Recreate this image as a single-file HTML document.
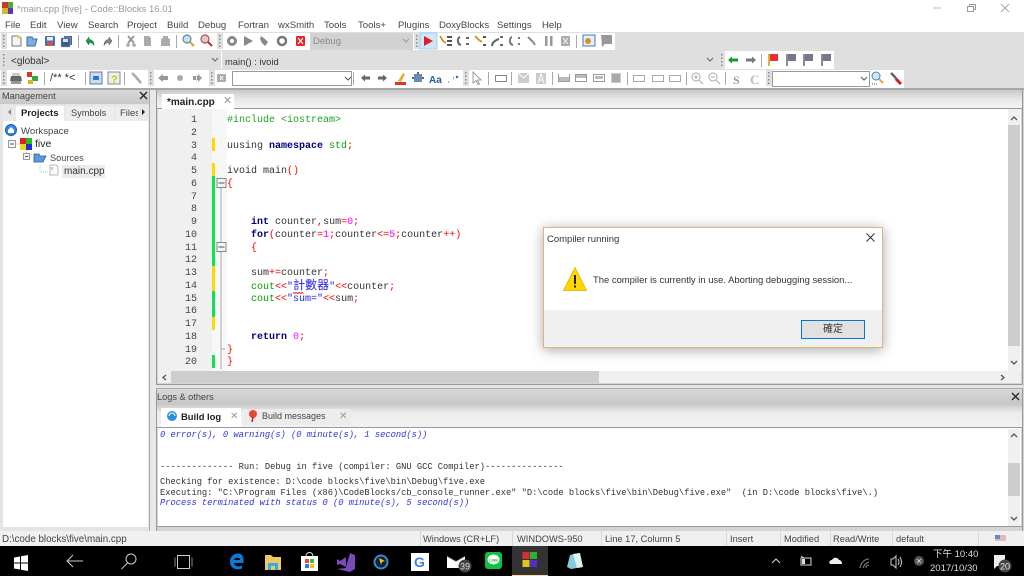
<!DOCTYPE html>
<html><head><meta charset="utf-8"><title>Code::Blocks</title>
<style>
html,body{margin:0;padding:0;width:1024px;height:576px;overflow:hidden;background:#f0f0f0}
body{position:relative;font-family:"Liberation Sans","Noto Sans CJK TC",sans-serif;font-size:10px;color:#333;filter:blur(.3px)}
div,span.t{position:absolute}
.t{position:absolute;white-space:pre;line-height:13px}
.m{top:19px;color:#444;font-size:9.6px}
.tb{background:#fff}
.code{position:absolute;left:227px;white-space:pre;font:10px/13px "Liberation Mono","Noto Sans CJK TC",monospace;color:#333}
.ln{position:absolute;left:158px;width:39px;text-align:right;font:10px/13px "Liberation Mono",monospace;color:#444}
.log{position:absolute;left:160px;white-space:pre;font:8.74px/11px "Liberation Mono",monospace;color:#333}
.k{color:#000080;font-weight:bold}.g{color:#22a022}.r{color:#f00}.n{color:#f0f}.s{color:#2222ee}.p{color:#00a000}
.bl{color:#3030e0;font-style:italic}
.st{top:533px;color:#444;font-size:9.3px}
.ss{position:absolute;top:531px;width:1px;height:15px;background:#d8d8d8}
svg{position:absolute;left:0;top:0}
</style></head><body>
<!-- title and menu -->
<div style="left:0;top:0;width:1024px;height:32px;background:#fff"></div>
<span class="t" style="left:17px;top:3px;color:#999;font-size:9.5px">*main.cpp [five] - Code::Blocks 16.01</span>
<span class="t m" style="left:5px">File</span><span class="t m" style="left:30px">Edit</span><span class="t m" style="left:57px">View</span><span class="t m" style="left:88px">Search</span><span class="t m" style="left:127px">Project</span><span class="t m" style="left:167px">Build</span><span class="t m" style="left:198px">Debug</span><span class="t m" style="left:238px">Fortran</span><span class="t m" style="left:278px">wxSmith</span><span class="t m" style="left:324px">Tools</span><span class="t m" style="left:358px">Tools+</span><span class="t m" style="left:398px">Plugins</span><span class="t m" style="left:439px">DoxyBlocks</span><span class="t m" style="left:497px">Settings</span><span class="t m" style="left:542px">Help</span>
<!-- toolbar zones -->
<div style="left:0;top:32px;width:1024px;height:56px;background:#dfdfdf"></div>
<div class="tb" style="left:0;top:33px;width:215px;height:17px"></div>
<div style="left:215px;top:33px;width:95px;height:17px;background:#fff"></div>
<div style="left:310px;top:33px;width:103px;height:17px;background:#d2d2d2;border:0"></div>
<span class="t" style="left:313px;top:35px;color:#888;font-size:9.5px">Debug</span>
<div class="tb" style="left:413px;top:33px;width:202px;height:17px"></div>
<div class="tb" style="left:0;top:70px;width:904px;height:18px"></div>
<div style="left:7px;top:52px;width:213px;height:16px;background:#dedede"></div>
<span class="t" style="left:11px;top:55px;color:#333">&lt;global&gt;</span>
<div style="left:221px;top:51px;width:1px;height:18px;background:#fff"></div>
<span class="t" style="left:225px;top:55px;color:#333;font-size:9.4px">main() : ivoid</span>
<div class="tb" style="left:724px;top:51px;width:110px;height:18px"></div>
<div style="left:232px;top:71px;width:120px;height:15px;background:#fff;border:1px solid #999;box-sizing:border-box"></div>
<div style="left:772px;top:71px;width:98px;height:16px;background:#fff;border:1px solid #999;box-sizing:border-box"></div>
<span class="t" style="left:50px;top:72px;color:#333;font-size:11px">/** *&lt;</span>
<!-- Body background -->
<div style="left:0;top:88px;width:1024px;height:443px;background:#d4d4d4"></div>
<div style="left:0;top:88px;width:1024px;height:2px;background:#a8a8a8"></div>
<div style="left:150px;top:90px;width:6px;height:441px;background:#e8e8e8"></div>
<div style="left:149px;top:90px;width:1px;height:441px;background:#aaa"></div>
<div style="left:156px;top:90px;width:1px;height:441px;background:#999"></div>
<div style="left:1022px;top:90px;width:1px;height:441px;background:#999"></div>
<div style="left:156px;top:384px;width:867px;height:5px;background:#e4e4e4;border-top:1px solid #999;border-bottom:1px solid #aaa;box-sizing:border-box"></div>
<!-- management -->
<div style="left:0;top:90px;width:149px;height:441px;background:#e4e4e4"></div>
<div style="left:0;top:90px;width:149px;height:14px;background:linear-gradient(#d8d8d8,#c8c8c8)"></div>
<span class="t" style="left:2px;top:90px;color:#444;font-size:9.2px">Management</span>
<div style="left:2px;top:105px;width:147px;height:16px;background:#e8e8e8"></div>
<div style="left:16px;top:106px;width:48px;height:16px;background:#fff"></div>
<div style="left:66px;top:107px;width:48px;height:14px;background:#eee"></div>
<div style="left:116px;top:107px;width:22px;height:14px;background:#eee;overflow:hidden"><span class="t" style="left:4px;top:0;color:#444;font-size:9.5px">Files</span></div>
<span class="t" style="left:21px;top:107px;color:#222;font-weight:bold;font-size:9.5px">Projects</span>
<span class="t" style="left:71px;top:107px;color:#444;font-size:9.2px">Symbols</span>
<div style="left:3px;top:121px;width:145px;height:406px;background:#fff"></div>
<span class="t" style="left:21px;top:125px;color:#444;font-size:9.6px">Workspace</span>
<span class="t" style="left:35px;top:138px;color:#222;font-size:10.5px">five</span>
<span class="t" style="left:50px;top:152px;color:#444;font-size:9.2px">Sources</span>
<div style="left:62px;top:165px;width:43px;height:13px;background:#ececec"></div>
<span class="t" style="left:64px;top:165px;color:#333">main.cpp</span>
<!-- editor -->
<div style="left:157px;top:90px;width:865px;height:18px;background:linear-gradient(#c8c8c8,#e8e8e8 50%,#f4f4f4)"></div>
<div style="left:157px;top:108px;width:865px;height:1px;background:#999"></div>
<div style="left:162px;top:94px;width:72px;height:15px;background:#fff"></div>
<span class="t" style="left:167px;top:96px;color:#222;font-weight:bold;font-size:10px">*main.cpp</span>
<span class="t" style="left:223px;top:95px;color:#999;font-size:11px">✕</span>
<div style="left:158px;top:109px;width:863px;height:274px;background:#fff"></div>
<div style="left:158px;top:109px;width:54px;height:262px;background:#f0f0f0"></div>
<div style="left:212px;top:109px;width:15px;height:262px;background:#f7f7f7"></div>
<div style="left:212px;top:138px;width:3px;height:13px;background:#ffd800"></div>
<div style="left:212px;top:163px;width:3px;height:13px;background:#ffd800"></div>
<div style="left:212px;top:176px;width:3px;height:90px;background:#0ce64a"></div>
<div style="left:212px;top:266px;width:3px;height:25px;background:#ffd800"></div>
<div style="left:212px;top:291px;width:3px;height:26px;background:#0ce64a"></div>
<div style="left:212px;top:317px;width:3px;height:13px;background:#ffd800"></div>
<div style="left:212px;top:355px;width:3px;height:13px;background:#0ce64a"></div>
<div class="ln" style="top:114px">1</div><div class="ln" style="top:127px">2</div><div class="ln" style="top:140px">3</div><div class="ln" style="top:152px">4</div><div class="ln" style="top:165px">5</div><div class="ln" style="top:178px">6</div><div class="ln" style="top:191px">7</div><div class="ln" style="top:203px">8</div><div class="ln" style="top:216px">9</div><div class="ln" style="top:229px">10</div><div class="ln" style="top:242px">11</div><div class="ln" style="top:254px">12</div><div class="ln" style="top:267px">13</div><div class="ln" style="top:280px">14</div><div class="ln" style="top:293px">15</div><div class="ln" style="top:305px">16</div><div class="ln" style="top:318px">17</div><div class="ln" style="top:331px">18</div><div class="ln" style="top:344px">19</div><div class="ln" style="top:356px">20</div>
<div class="code" style="top:114px"><span class="g">#include &lt;iostream&gt;</span></div>
<div class="code" style="top:140px">uusing <span class="k">namespace</span> <span class="p">std</span><span class="r">;</span></div>
<div class="code" style="top:165px">ivoid main<span class="r">()</span></div>
<div class="code" style="top:178px"><span class="r">{</span></div>
<div class="code" style="top:216px">    <span class="k">int</span> counter<span class="r">,</span>sum<span class="r">=</span><span class="n">0</span><span class="r">;</span></div>
<div class="code" style="top:229px">    <span class="k">for</span><span class="r">(</span>counter<span class="r">=</span><span class="n">1</span><span class="r">;</span>counter<span class="r">&lt;=</span><span class="n">5</span><span class="r">;</span>counter<span class="r">++)</span></div>
<div class="code" style="top:242px">    <span class="r">{</span></div>
<div class="code" style="top:267px">    sum<span class="r">+=</span>counter<span class="r">;</span></div>
<div class="code" style="top:280px">    <span class="p">cout</span><span class="r">&lt;&lt;</span><span class="s">"<span style="font-size:12px">計數器</span>"</span><span class="r">&lt;&lt;</span>counter<span class="r">;</span></div>
<div class="code" style="top:293px">    <span class="p">cout</span><span class="r">&lt;&lt;</span><span class="s">"sum="</span><span class="r">&lt;&lt;</span>sum<span class="r">;</span></div>
<div class="code" style="top:331px">    <span class="k">return</span> <span class="n">0</span><span class="r">;</span></div>
<div class="code" style="top:344px"><span class="r">}</span></div>
<div class="code" style="top:356px"><span class="r">}</span></div>
<!-- editor scrollbars -->
<div style="left:1008px;top:109px;width:12px;height:262px;background:#f0f0f0"></div>
<div style="left:1008px;top:125px;width:12px;height:221px;background:#cdcdcd"></div>
<div style="left:158px;top:371px;width:863px;height:12px;background:#f0f0f0"></div>
<div style="left:171px;top:371px;width:428px;height:12px;background:#cdcdcd"></div>
<!-- logs -->
<div style="left:157px;top:389px;width:865px;height:14px;background:linear-gradient(#d8d8d8,#c8c8c8)"></div>
<span class="t" style="left:157px;top:391px;color:#444;font-size:9.2px">Logs &amp; others</span>
<div style="left:157px;top:403px;width:865px;height:24px;background:linear-gradient(#c4c4c4,#ececec 40%,#f2f2f2)"></div>
<div style="left:157px;top:427px;width:865px;height:1px;background:#999"></div>
<div style="left:161px;top:408px;width:80px;height:19px;background:#fff"></div>
<div style="left:243px;top:409px;width:108px;height:16px;background:#ececec"></div>
<span class="t" style="left:181px;top:410px;color:#222;font-weight:bold;font-size:9.4px">Build log</span>
<span class="t" style="left:262px;top:410px;color:#444;font-size:9px">Build messages</span>
<span class="t" style="left:230px;top:410px;color:#999;font-size:10px">✕</span>
<span class="t" style="left:339px;top:410px;color:#999;font-size:10px">✕</span>
<div style="left:158px;top:428px;width:863px;height:98px;background:#fff"></div>
<div style="left:157px;top:526px;width:865px;height:1px;background:#999"></div>
<div class="log bl" style="top:430px">0 error(s), 0 warning(s) (0 minute(s), 1 second(s))</div>
<div class="log" style="top:462px">-------------- Run: Debug in five (compiler: GNU GCC Compiler)---------------</div>
<div class="log" style="top:477px">Checking for existence: D:\code blocks\five\bin\Debug\five.exe</div>
<div class="log" style="top:488px">Executing: "C:\Program Files (x86)\CodeBlocks/cb_console_runner.exe" "D:\code blocks\five\bin\Debug\five.exe"  (in D:\code blocks\five\.)</div>
<div class="log bl" style="top:498px">Process terminated with status 0 (0 minute(s), 5 second(s))</div>
<div style="left:1008px;top:429px;width:12px;height:97px;background:#f0f0f0"></div>
<div style="left:1008px;top:463px;width:12px;height:33px;background:#cdcdcd"></div>
<!-- status -->
<div style="left:0;top:531px;width:1024px;height:15px;background:#f0f0f0"></div>
<span class="t st" style="left:2px;font-size:9.8px">D:\code blocks\five\main.cpp</span>
<span class="t st" style="left:423px">Windows (CR+LF)</span>
<span class="t st" style="left:517px">WINDOWS-950</span>
<span class="t st" style="left:605px">Line 17, Column 5</span>
<span class="t st" style="left:730px">Insert</span>
<span class="t st" style="left:784px">Modified</span>
<span class="t st" style="left:833px">Read/Write</span>
<span class="t st" style="left:896px">default</span>
<div class="ss" style="left:420px"></div><div class="ss" style="left:512px"></div><div class="ss" style="left:601px"></div><div class="ss" style="left:726px"></div><div class="ss" style="left:780px"></div><div class="ss" style="left:830px"></div><div class="ss" style="left:892px"></div><div class="ss" style="left:978px"></div>
<!-- taskbar -->
<div style="left:0;top:546px;width:1024px;height:30px;background:#000"></div>
<div style="left:512px;top:546px;width:36px;height:30px;background:#333"></div>
<div style="left:512px;top:575px;width:36px;height:1px;background:#ffd9a0"></div>
<span class="t" style="left:933px;top:548px;width:44px;text-align:center;color:#ddd;font-size:9.5px">下午 10:40</span>
<span class="t" style="left:930px;top:562px;color:#ddd;font-size:9.5px">2017/10/30</span>

<!-- Icons overlay -->
<svg width="1024" height="576" viewBox="0 0 1024 576">
 <defs>
  <g id="grip"><rect x="-2" y="-2" width="6" height="16" fill="#e0e0e0"/><path d="M0 0h1.500v1.500H0zM0 3.500h1.500v1.500H0zM0 7h1.500v1.500H0zM0 10.500h1.500v1.500H0z" fill="#888"/></g>
  <g id="sep"><rect width="1" height="13" fill="#aaa"/></g>
 </defs>
 <!-- app icon -->
 <rect x="2" y="2" width="6" height="6" fill="#c33"/><rect x="8" y="2" width="5" height="6" fill="#5a3"/><rect x="2" y="8" width="6" height="6" fill="#cb2"/><rect x="8" y="8" width="5" height="6" fill="#63a"/>
 <!-- window controls -->
 <path d="M933 8h8" stroke="#bbb"/><path d="M967.500 6.500h6v5h-6zM969.500 6.500v-2h6v5h-2" fill="none" stroke="#999"/><path d="M1001 4l8 8M1009 4l-8 8" stroke="#aaa" fill="none"/>
 <!-- panel close -->
 <path d="M140 92l7 7M147 92l-7 7M1012 393l7 7M1019 393l-7 7" stroke="#222" stroke-width="1.300" fill="none"/>
 <!-- grips -->
 <use href="#grip" x="3" y="35"/><use href="#grip" x="219" y="35"/><use href="#grip" x="416" y="35"/>
 <use href="#grip" x="3" y="54"/><use href="#grip" x="721" y="54"/>
 <use href="#grip" x="3" y="72"/><use href="#grip" x="150" y="72"/><use href="#grip" x="211" y="72"/><use href="#grip" x="465" y="72"/><use href="#grip" x="768" y="72"/>
 <!-- seps -->
 <use href="#sep" x="78" y="35"/><use href="#sep" x="118" y="35"/><use href="#sep" x="176" y="35"/><use href="#sep" x="576" y="35"/><use href="#sep" x="761" y="54"/>
 <use href="#sep" x="44" y="72"/><use href="#sep" x="85" y="72"/><use href="#sep" x="124" y="72"/><use href="#sep" x="353" y="72"/><use href="#sep" x="488" y="72"/><use href="#sep" x="511" y="72"/><use href="#sep" x="552" y="72"/><use href="#sep" x="627" y="72"/><use href="#sep" x="686" y="72"/><use href="#sep" x="725" y="72"/>
 <!-- row1 icons -->
 <path d="M12 36h7l2 2v8h-9z" fill="#f4f4f4" stroke="#778"/><circle cx="19" cy="37" r="1.500" fill="#ec3"/>
 <path d="M27 37h5l1 2h4l-2 7h-8z" fill="#7ab0e0" stroke="#46a"/>
 <rect x="45" y="36" width="10" height="10" rx="1" fill="#4a72a8"/><rect x="47" y="37" width="6" height="3.500" fill="#eee"/><rect x="47" y="42" width="6" height="4" fill="#c55"/>
 <rect x="64" y="36" width="8" height="9" fill="#4a6a98"/><rect x="61" y="38" width="9" height="9" fill="#3a5a88" stroke="#9bc" stroke-width=".5"/><rect x="63" y="39" width="5" height="3" fill="#dde"/>
 <path d="M86 41l3-4v2.500c3 0 5 2 5 6-1-2-3-3-5-3v2.500z" fill="#1a9a3a" stroke="#063" stroke-width=".5"/>
 <path d="M112 41l-3-4v2.500c-3 0-5 2-5 6 1-2 3-3 5-3v2.500z" fill="#888" stroke="#444" stroke-width=".5"/>
 <path d="M128 36l6 7M134 36l-6 7" stroke="#999" stroke-width="2"/><circle cx="128" cy="45" r="1.800" fill="#aaa"/><circle cx="134" cy="45" r="1.800" fill="#aaa"/>
 <path d="M144 36h5l2 2v8h-7z" fill="#aaa"/><path d="M161 46v-7l2-1v-2h5v2l2 1v7z" fill="#aaa"/>
 <circle cx="187" cy="39" r="4" fill="#bfe0f5" stroke="#689" stroke-width="1.200"/><path d="M190 42l4 4" stroke="#d9a030" stroke-width="2"/>
 <circle cx="205" cy="39" r="4" fill="#e8c8c8" stroke="#a55" stroke-width="1.200"/><path d="M208 42l4 4" stroke="#a33" stroke-width="2"/>
 <circle cx="232" cy="41" r="3.500" fill="none" stroke="#888" stroke-width="3"/>
 <path d="M244 36l9 5-9 5z" fill="#888"/>
 <path d="M261 36l4 3 3 3-3 4-3-3-2-4z" fill="#888"/><circle cx="282" cy="41" r="4" fill="none" stroke="#777" stroke-width="2.500"/>
 <rect x="296" y="36" width="9" height="10" rx="1" fill="#e22"/><path d="M298 38l5 6M303 38l-5 6" stroke="#fff" stroke-width="1.200"/>
 <path d="M403 39l3 3 3-3" fill="none" stroke="#999"/>
 <!-- debug -->
 <rect x="420" y="33" width="17" height="16" fill="#cfe5f8" stroke="#9cc8ee" stroke-width=".8"/>
 <path d="M424 36l9 5-9 5z" fill="#e02020"/>
 <path d="M440 36l3 5 3 2" stroke="#d99020" stroke-width="1.800" fill="none"/><path d="M447 37h5M447 41h5M447 45h5" stroke="#555" stroke-width="2"/>
 <path d="M460 37c-3 1-3 7 1 8M466 38h3M466 44h3" stroke="#666" stroke-width="2" fill="none"/>
 <path d="M475 36l4 4 3 2" stroke="#d99020" stroke-width="1.800" fill="none"/><path d="M483 37h3M483 45h3" stroke="#555" stroke-width="2"/>
 <path d="M492 46c0-4 4-6 7-7M500 37h3M500 45h3" stroke="#666" stroke-width="2" fill="none"/>
 <path d="M512 37c-3 1-3 7 1 8M518 38h2M518 44h2" stroke="#777" stroke-width="2" fill="none"/>
 <path d="M528 37l5 5 2 3" stroke="#888" stroke-width="2" fill="none"/>
 <rect x="545" y="36" width="2.500" height="10" fill="#999"/><rect x="550" y="36" width="2.500" height="10" fill="#999"/>
 <rect x="561" y="36" width="9" height="10" rx="1" fill="#aaa"/><path d="M563 38l5 6M568 38l-5 6" stroke="#eee"/>
 <rect x="583" y="35" width="12" height="11" fill="#e8eef8" stroke="#4a7ab8"/><circle cx="588" cy="41" r="3" fill="#d8902a"/>
 <path d="M601 35h11v9h-7l-3 3z" fill="#999"/>
 <!-- row2 -->
 <path d="M212 58l3 3 3-3" fill="none" stroke="#666"/><path d="M707 58l3 3 3-3" fill="none" stroke="#666"/>
 <path d="M728 60l4-3.500v2h6v3h-6v2z" fill="#1a9a2a"/><path d="M756 60l-4-3.500v2h-6v3h6v2z" fill="#777"/>
 <path d="M769 54v12" stroke="#c90" stroke-width="1.500"/><path d="M770 54h8v7h-8z" fill="#e83030"/>
 <path d="M787 54v12M804 54v12M822 54v12" stroke="#667" stroke-width="1.500"/><path d="M788 54h8v7h-8zM805 54h8v7h-8zM823 54h8v7h-8z" fill="#778"/>
 <!-- row3 -->
 <path d="M11 76h10l1 5h-12z" fill="#666"/><rect x="12" y="73" width="8" height="3" fill="#ccc"/><rect x="11" y="81" width="10" height="3" fill="#999"/>
 <rect x="27" y="72" width="5" height="5" fill="#d33"/><rect x="32" y="76" width="6" height="5" fill="#3a3"/><rect x="28" y="80" width="5" height="4" fill="#cb2"/>
 <rect x="90" y="72" width="12" height="12" fill="#cde" stroke="#679"/><rect x="93" y="76" width="6" height="4" rx="1" fill="#27c"/>
 <rect x="108" y="72" width="12" height="12" fill="#eee" stroke="#889"/><text x="111" y="83" font-size="11" font-weight="bold" fill="#cc0" font-family="Liberation Sans">?</text>
 <path d="M132 73l3 3 6 7" stroke="#aaa" stroke-width="2.500" fill="none"/>
 <path d="M158 78l5-4v8zM163 76h5v4h-5z" fill="#999"/><circle cx="180" cy="78" r="3" fill="#aaa"/><path d="M197 78l-1-4v8zM193 76h5v4h-5zM198 74l4 4-4 4z" fill="#999"/>
 <rect x="217" y="74" width="9" height="8" rx="1" fill="#aaa"/><path d="M220 76l3 4M223 76l-3 4" stroke="#fff"/>
 <path d="M345 77l3 3 3-3" fill="none" stroke="#555"/><path d="M861 77l3 3 3-3" fill="none" stroke="#555"/>
 <path d="M361 78l4-3.500v2h5v3h-5v2z" fill="#666"/><path d="M387 78l-4-3.500v2h-5v3h5v2z" fill="#666"/>
 <rect x="395" y="82" width="11" height="3" fill="#d33"/><path d="M398 81l5-8 2 1-4 8z" fill="#e8b020"/>
 <rect x="414" y="74" width="8" height="8" fill="#6a8ab0"/><path d="M412 78h2M422 78h2M418 72v2" stroke="#567" stroke-width="2"/>
 <text x="429" y="83" font-size="10" font-weight="bold" fill="#2a5a9a" font-family="Liberation Sans">Aa</text>
 <path d="M448 82h1M453 78h1M456 76l2 2M458 76l-2 2" stroke="#26a" fill="none"/>
 <path d="M473 72v11l3-2.500 2 4 1.500-.5-2-4h3.500z" fill="#fff" stroke="#888" stroke-width=".8"/>
 <rect x="495.500" y="75.500" width="11" height="6" fill="none" stroke="#888"/>
 <path d="M518 73h11v10h-11z" fill="#ccc"/><path d="M518 73l5.500 5 5.500-5" stroke="#fff" fill="none"/>
 <path d="M536 73h10v11h-10z" fill="#ccc"/><path d="M538 83l3-9 3 9M539 80h4" stroke="#fff" fill="none"/>
 <rect x="558.500" y="74.500" width="11" height="7" fill="#bbb" stroke="#999"/><rect x="559" y="74" width="10" height="3" fill="#fff"/>
 <rect x="575.500" y="74.500" width="11" height="7" fill="#bbb" stroke="#999"/><rect x="576" y="78" width="10" height="3" fill="#fff"/>
 <rect x="593.500" y="74.500" width="11" height="7" fill="#fff" stroke="#999"/><rect x="595" y="76" width="8" height="3" fill="#bbb"/>
 <rect x="611.500" y="73.500" width="9" height="9" fill="#aaa" stroke="#ccc"/>
 <path d="M633.500 75.500h11v6h-11zM652.500 75.500h11v6h-11zM669.500 75.500h11v6h-11z" fill="none" stroke="#aaa"/>
 <circle cx="696" cy="77" r="4" fill="none" stroke="#aaa"/><path d="M699 80l4 4M694 77h4M696 75v4" stroke="#aaa"/>
 <circle cx="713" cy="77" r="4" fill="none" stroke="#aaa"/><path d="M716 80l4 4M711 77h4" stroke="#aaa"/>
 <text x="733" y="84" font-size="12" font-weight="bold" fill="#999" font-family="Liberation Serif">S</text><text x="750" y="84" font-size="13" font-weight="bold" fill="#bbb" font-family="Liberation Serif">C</text>
 <circle cx="876" cy="76" r="4" fill="#cde8f8" stroke="#48a"/><path d="M879 79l4 4" stroke="#da3" stroke-width="2"/><path d="M872 84h6" stroke="#555" stroke-dasharray="1 1"/>
 <path d="M891 73l3 3 4 5 2 2" stroke="#666" stroke-width="2.500" fill="none"/><path d="M896 79l5 5" stroke="#c22" stroke-width="3"/>
 <!-- Management icons -->
 <path d="M11 109l-3 3 3 3z" fill="#888"/><path d="M142 109l3 3-3 3z" fill="#222"/>
 <circle cx="11" cy="130" r="5.500" fill="#3a88e0" stroke="#1a5ab0"/><path d="M8 130l3-3 3 3v3h-6z" fill="#fff"/>
 <path d="M11 136v8h9M26 150v5h7M12 149v-2M40 165v7h9" stroke="#bbb" stroke-dasharray="1 1" fill="none"/>
 <rect x="8.500" y="140.500" width="7" height="7" fill="#f4f4f4" stroke="#999"/><path d="M10 144h4" stroke="#555"/>
 <rect x="23.500" y="153.500" width="6" height="6" fill="#f4f4f4" stroke="#999"/><path d="M25 156.500h3" stroke="#555"/>
 <rect x="20" y="138" width="6" height="6" fill="#e02020"/><rect x="26" y="138" width="6" height="6" fill="#20c020"/><rect x="20" y="144" width="6" height="6" fill="#e8d820"/><rect x="26" y="144" width="6" height="6" fill="#2030d0"/>
 <path d="M34 154h5l1 2h6l-3 6H34z" fill="#5a98e0" stroke="#2a5aa0" stroke-width=".8"/>
 <path d="M50 165h6l2 2v8h-8z" fill="#fafafa" stroke="#bbb"/><path d="M52 167v3" stroke="#e83" stroke-width="1"/>
 <!-- folds -->
 <rect x="217" y="178.500" width="9" height="9" fill="#f4f4f4" stroke="#888"/><path d="M218.500 183h6" stroke="#555"/>
 <rect x="217" y="242.500" width="9" height="9" fill="#f4f4f4" stroke="#888"/><path d="M218.500 247h6" stroke="#555"/>
 <path d="M221 188v54M221 252v97h4M221 349v20" stroke="#aaa" fill="none"/>
 <!-- squiggle -->
 <path d="M293 292.500l1.500 1 1.500-1 1.500 1 1.500-1 1.500 1 1.500-1 1.500 1" stroke="#d00" fill="none" stroke-width=".8"/>
 <!-- scroll arrows -->
 <path d="M1011 120l3-3 3 3M1011 361l3 3 3-3M1001 375l3 2.500-3 2.500M166 375l-3 2.500 3 2.500M1011 437l3-3 3 3M1011 517l3 3 3-3" fill="none" stroke="#555" stroke-width="1.300"/>
 <!-- log tab icons -->
 <circle cx="172" cy="416" r="5" fill="#2a90e0"/><path d="M169 416a3 3 0 0 1 6 0" stroke="#fff" fill="none"/>
 <circle cx="253" cy="414" r="4" fill="#e84830"/><path d="M253 417l-1 5" stroke="#b22" stroke-width="1.500"/>
 <!-- Taskbar icons -->
 <path d="M14 557.500l6-1v6h-6zM21 556.300l7-1.300v7.500h-7zM14 563.500h6v6l-6-1zM21 563.500h7v7.500l-7-1.300z" fill="#fff"/>
 <path d="M83 561H68M73 555l-6 6 6 6" stroke="#ccc" fill="none"/>
 <circle cx="131" cy="559" r="5" stroke="#ccc" fill="none"/><path d="M127.500 563l-6 6" stroke="#ccc"/>
 <rect x="177.500" y="555.500" width="12" height="13" stroke="#ccc" fill="none"/><path d="M175 557.500v9M192 557.500v9" stroke="#888" fill="none"/>
 <path d="M243 563h-9c.5 3 4 4.500 8 2.500v3c-5 2-12 .5-12-7 0-5 4-8 8-8 4.500 0 6 3 5.500 9.500zM240 560c0-3-5-3-6 0z" fill="#0c78d8" fill-rule="evenodd"/>
 <path d="M265 555h6l2 2h8v13h-16z" fill="#f0c860"/><rect x="268" y="563" width="10" height="7" fill="#3aa8e8"/><rect x="271" y="566" width="4" height="4" fill="#f0c860"/>
 <rect x="301" y="556" width="17" height="15" fill="#fff"/><path d="M306 556a3.500 3.500 0 0 1 7 0" stroke="#ddd" fill="none"/>
 <rect x="305" y="559" width="4" height="4" fill="#e44"/><rect x="310" y="559" width="4" height="4" fill="#4b3"/><rect x="305" y="564" width="4" height="4" fill="#28d"/><rect x="310" y="564" width="4" height="4" fill="#fb2"/>
 <path d="M350 553l5 2v14l-5 3-13-3 9-1v-11l-6 4-3-2v6l3-1 6 3" fill="#7a4ab8"/>
 <circle cx="381" cy="562" r="6.500" fill="#123" stroke="#3a8ad0" stroke-width="2"/><path d="M379 558l6 3-3 1-1 3z" fill="#f0c020"/>
 <rect x="411" y="553" width="18" height="18" fill="#fff"/>
 <text x="414" y="567" font-size="14" font-weight="bold" fill="#4080e8" font-family="Liberation Sans">G</text>
 <rect x="447" y="556" width="18" height="12" fill="#fff"/><path d="M447 556l9 5 9-5" stroke="#333" fill="#000"/>
 <circle cx="465" cy="566" r="6.500" fill="#444"/><text x="465" y="569.500" font-size="9" fill="#ddd" text-anchor="middle" font-family="Liberation Sans">39</text>
 <rect x="485" y="552" width="17" height="17" rx="3" fill="#10c040"/><ellipse cx="493.500" cy="559.500" rx="6" ry="5" fill="#fff"/><text x="493.500" y="561.500" font-size="4" font-weight="bold" fill="#10c040" text-anchor="middle" font-family="Liberation Sans">LINE</text>
 <rect x="522.500" y="552" width="7" height="7" fill="#d83030"/><rect x="530" y="552" width="7" height="7" fill="#30b030"/><rect x="522.500" y="560" width="7" height="7" fill="#d8c820"/><rect x="530" y="560" width="7" height="7" fill="#5030c0"/>
 <path d="M570 555l9-2 4 14-12 2-4-2z" fill="#8ac8e0"/><path d="M573 554l7-1 3 14-6 1z" fill="#e0f0f0"/>
 <path d="M772 563l4-4 4 4" stroke="#ddd" fill="none"/>
 <rect x="801" y="558" width="10" height="7" stroke="#ddd" fill="none"/><rect x="802" y="559" width="3" height="5" fill="#ddd"/><path d="M801 556l3 2" stroke="#ddd"/>
 <path d="M830 564c-2-3 1-4 2-4 1-3 6-3 7 0 2 0 3 2 3 4z" fill="#eee"/>
 <path d="M863 568c1-3 3-5 6-6M866 568c0-2 1-3 3-3M860 568c1-6 5-9 9-9" stroke="#888" fill="none"/>
 <path d="M891 559h2l3-3v12l-3-3h-2z" stroke="#ccc" fill="none"/><path d="M898 559q2 3 0 6M900 557q3 5 0 10" stroke="#ccc" fill="none"/>
 <circle cx="919" cy="561" r="5" fill="#555"/><path d="M917 559l4 4M921 559l-4 4" stroke="#ccc"/>
 <path d="M994 555h11v11h-8l-3 3z" fill="#eee"/><circle cx="1005" cy="566" r="6.500" fill="#444"/><text x="1005" y="569.500" font-size="9" fill="#eee" text-anchor="middle" font-family="Liberation Sans">20</text>
 <rect x="995" y="535" width="11" height="7" fill="#eef"/><path d="M995 536h11M995 538h11M995 540h11" stroke="#e08080"/><rect x="995" y="535" width="5" height="4" fill="#68c"/>
</svg>

<!-- dialog -->
<div style="left:543px;top:227px;width:340px;height:121px;background:#fff;border:1px solid #e0b47a;box-sizing:border-box;box-shadow:0 2px 12px rgba(0,0,0,.35)">
 <div style="left:0;top:82px;width:338px;height:37px;background:#f0f0f0"></div>
 <span class="t" style="left:3px;top:5px;color:#333;font-size:9.5px">Compiler running</span>
 <svg width="24" height="24" style="left:19px;top:39px" viewBox="0 0 24 24"><path d="M12 .5L23.500 23.500H.5z" fill="#ffd800" stroke="#e8a800" stroke-width=".8"/><rect x="11" y="8" width="2" height="9" fill="#222"/><rect x="11" y="18.500" width="2" height="2" fill="#222"/></svg>
 <span class="t" style="left:49px;top:45px;color:#333;font-size:9.44px">The compiler is currently in use. Aborting debugging session...</span>
 <svg width="12" height="12" style="left:321px;top:4px" viewBox="0 0 12 12"><path d="M1.500 1.500l8 8M9.500 1.500l-8 8" stroke="#333" fill="none"/></svg>
 <div style="left:257px;top:92px;width:64px;height:19px;background:#e1e1e1;border:1.500px solid #0078d7;box-sizing:border-box"></div>
 <span class="t" style="left:257px;top:95px;width:64px;text-align:center;color:#333;font-size:10px">確定</span>
</div>
</body></html>
